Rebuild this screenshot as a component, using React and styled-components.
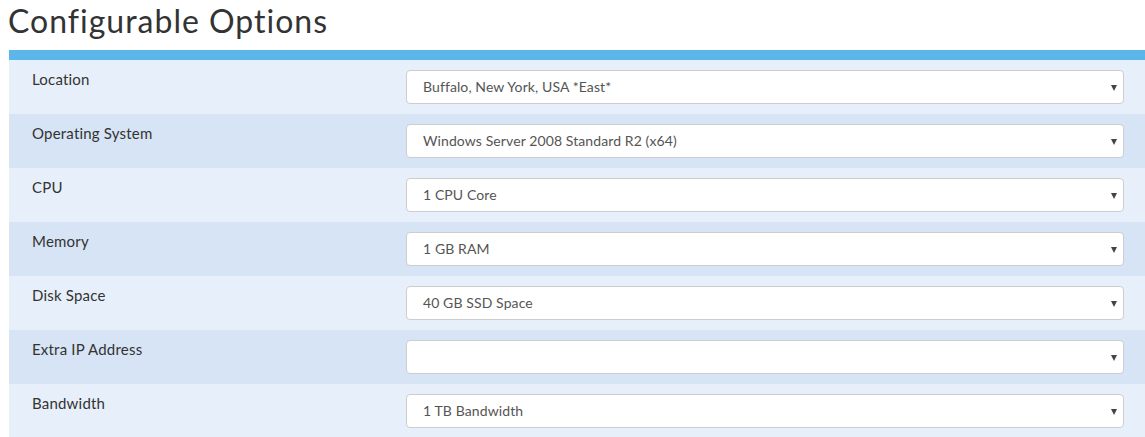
import React from "react";
import styled, { createGlobalStyle } from "styled-components";

const Global = createGlobalStyle`
  html, body { margin: 0; padding: 0; background: #fff; }
  body { font-family: "Lato", "Open Sans", sans-serif; color: #333; overflow: hidden; }
`;

const Page = styled.div`
  width: 1145px;
  height: 437px;
  overflow: hidden;
`;

const Title = styled.h1`
  margin: 0;
  padding: 2px 0 0 8px;
  height: 46px;
  box-sizing: border-box;
  font-size: 32px;
  font-weight: 400;
  color: #333;
  letter-spacing: 1px;
  line-height: 38px;
`;

const Panel = styled.div`
  margin-left: 9px;
  border-top: 10px solid #5cb6ea;
  margin-top: 4px;
`;

const Row = styled.div`
  display: grid;
  grid-template-columns: 374px 718px;
  align-items: start;
  height: 54px;
  box-sizing: border-box;
  padding: 10px 0 0 23px;
  background: ${(p) => (p.$alt ? "#d6e4f5" : "#e7f0fa")};
`;

const Label = styled.div`
  font-size: 15px;
  color: #333;
  line-height: 20px;
  margin-top: -1px;
  letter-spacing: 0.2px;
`;

const SelectBox = styled.div`
  position: relative;
  height: 34px;
  box-sizing: border-box;
  border: 1px solid #cdcdcd;
  border-radius: 4px;
  background: #fff;
  display: flex;
  align-items: center;
  padding: 0 0 1px 16px;
  font-size: 14px;
  color: #555;
  letter-spacing: 0.1px;
  &::after {
    content: "";
    position: absolute;
    right: 6px;
    top: 14px;
    border-left: 3.5px solid transparent;
    border-right: 3.5px solid transparent;
    border-top: 6px solid #444;
  }
`;

const options = [
  ["Location", "Buffalo, New York, USA *East*"],
  ["Operating System", "Windows Server 2008 Standard R2 (x64)"],
  ["CPU", "1 CPU Core"],
  ["Memory", "1 GB RAM"],
  ["Disk Space", "40 GB SSD Space"],
  ["Extra IP Address", ""],
  ["Bandwidth", "1 TB Bandwidth"],
];

export default function App() {
  return (
    <Page>
      <Global />
      <Title>Configurable Options</Title>
      <Panel>
        {options.map(([label, value], i) => (
          <Row key={label} $alt={i % 2 === 1}>
            <Label>{label}</Label>
            <SelectBox>{value}</SelectBox>
          </Row>
        ))}
      </Panel>
    </Page>
  );
}
